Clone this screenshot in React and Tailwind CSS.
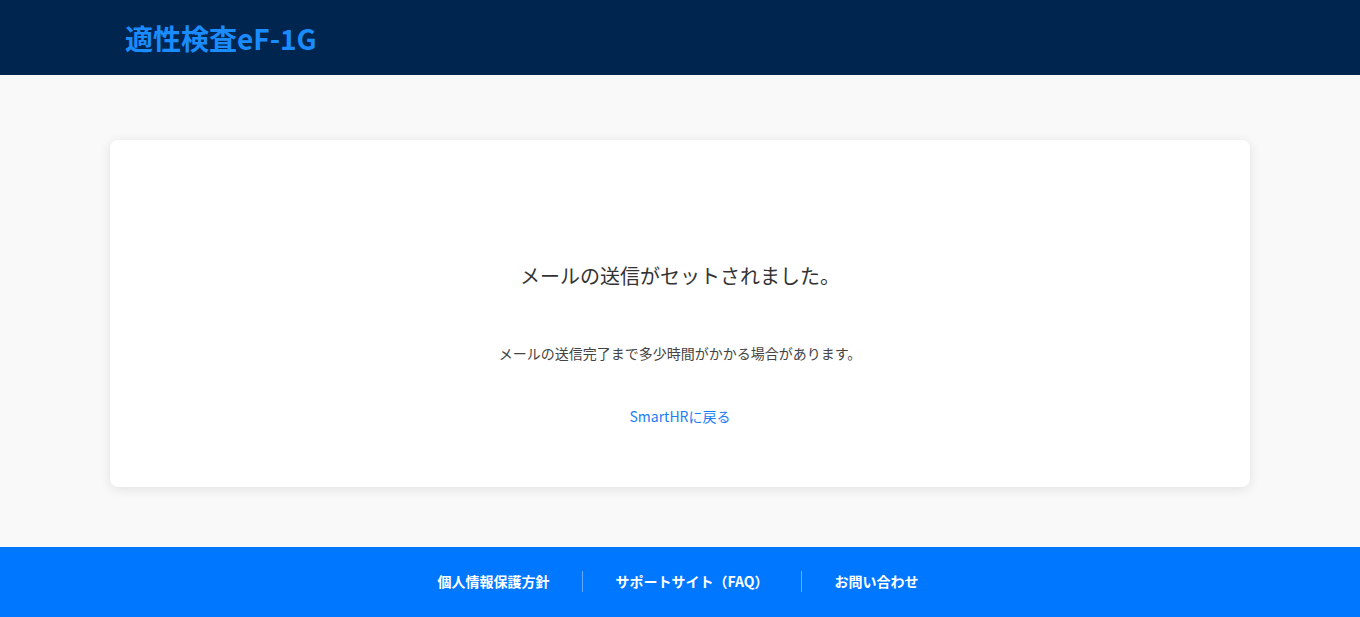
import React from "react";

export default function App() {
  const font = { fontFamily: '"Noto Sans CJK JP", "Noto Sans", sans-serif' };
  return (
    <div className="flex min-h-[617px] flex-col bg-[#f9f9f9]" style={font}>
      <header className="flex h-[75px] items-center bg-[#002650] px-[125px]">
        <h1 className="text-[28px] font-bold leading-none text-[#1a8cff]">適性検査eF-1G</h1>
      </header>
      <main className="flex-1 px-[110px] pt-[65px] pb-[60px]">
        <div className="flex h-[347px] flex-col items-center rounded-lg bg-white pt-[121px] shadow-[0_2px_12px_rgba(0,0,0,0.1)]">
          <p className="text-[20px] leading-[30px] text-[#333]">メールの送信がセットされました。</p>
          <p className="mt-[52px] text-[14px] leading-[21px] text-[#444]">メールの送信完了まで多少時間がかかる場合があります。</p>
          <a href="#" className="mt-[42px] text-[14px] leading-[21px] text-[#1a7ef5]">SmartHRに戻る</a>
        </div>
      </main>
      <footer className="flex h-[70px] items-center justify-center bg-[#0077ff] pb-[2px] pr-[4px]">
        <a href="#" className="px-[32.5px] text-[14px] font-bold text-white">個人情報保護方針</a>
        <span className="h-[21px] w-px bg-white/40"></span>
        <a href="#" className="px-[32.5px] text-[14px] font-bold text-white">サポートサイト（FAQ）</a>
        <span className="h-[21px] w-px bg-white/40"></span>
        <a href="#" className="px-[32.5px] text-[14px] font-bold text-white">お問い合わせ</a>
      </footer>
    </div>
  );
}
